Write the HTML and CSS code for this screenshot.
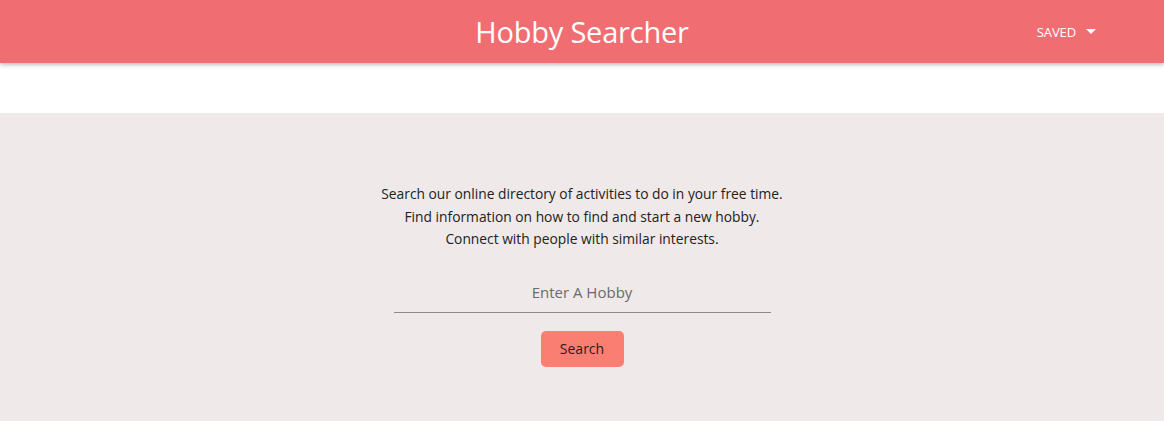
FILE: index.html
```html
<!DOCTYPE html>
<html>
<head>
<meta charset="utf-8">
<link rel="stylesheet" href="styles.css">
</head>
<body>
<header class="topbar">
  <h1 class="title">Hobby Searcher</h1>
  <div class="saved">SAVED <svg class="caret" width="10" height="5" viewBox="0 0 10 5"><path d="M0 0 L10 0 L5 5 Z" fill="#fff"/></svg></div>
</header>
<div class="spacer"></div>
<main class="hero">
  <p class="intro">Search our online directory of activities to do in your free time.<br>Find information on how to find and start a new hobby.<br>Connect with people with similar interests.</p>
  <input class="field" type="text" placeholder="Enter A Hobby">
  <button class="btn">Search</button>
</main>
</body>
</html>
```
FILE: styles.css
```css
html, body { margin: 0; padding: 0; }
body { font-family: "Open Sans", "Noto Sans", sans-serif; background: #efe9e9; height: 421px; overflow: hidden; }
.topbar { position: relative; z-index: 2; height: 63px; background: #f06e72; display: flex; align-items: center; justify-content: center; box-shadow: 0 2px 4px rgba(0,0,0,0.25); }
.title { margin: 0; font-weight: 400; font-size: 29px; color: #fff; letter-spacing: -0.2px; }
.saved { position: absolute; right: 68px; top: 0; height: 63px; display: flex; align-items: center; gap: 10px; color: #fff; font-size: 13px; letter-spacing: -0.1px; }
.spacer { height: 50px; background: #fff; }
.hero { display: flex; flex-direction: column; align-items: center; padding-top: 70px; }
.intro { margin: 0; text-align: center; font-size: 13.8px; line-height: 22.5px; color: #222; }
.field { margin-top: 21px; width: 377px; height: 40px; border: none; border-bottom: 1px solid #8a8a8a; background: transparent; text-align: center; font-family: inherit; font-size: 15px; padding: 0; outline: none; color: #333; }
.field::placeholder { color: #6b6b6b; }
.btn { margin-top: 18px; width: 83px; height: 36px; border: none; border-radius: 5px; background: #fa7f72; color: #222; font-family: inherit; font-size: 14px; }
```
